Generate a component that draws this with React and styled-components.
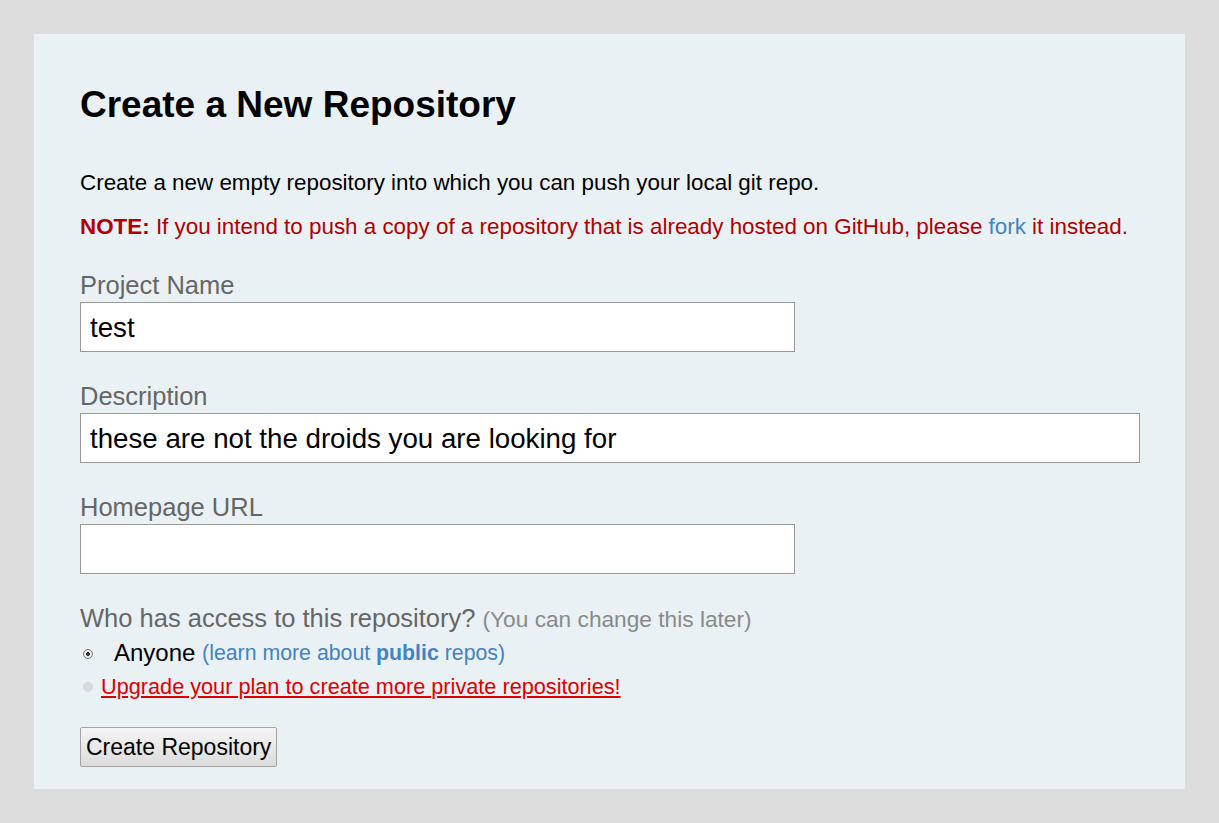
import React from "react";
import styled, { createGlobalStyle } from "styled-components";

const Global = createGlobalStyle`
  html, body { margin: 0; padding: 0; background: #dddddd; }
  body { font-family: "Liberation Sans", Arial, sans-serif; }
`;

const Page = styled.div`
  padding: 34px;
  min-height: 823px;
  box-sizing: border-box;
`;

const Panel = styled.div`
  background: #e9f1f5;
  padding: 49px 46px 0 46px;
  box-sizing: border-box;
  height: 755px;
`;

const Title = styled.h1`
  margin: 0 0 43px;
  font-size: 37px;
  line-height: 44px;
  font-weight: bold;
  color: #000;
`;

const Text = styled.p`
  margin: 0 0 ${(p) => p.$mb || 0}px;
  font-size: 22.4px;
  line-height: 26px;
  color: ${(p) => p.$color || "#000"};
`;

const Link = styled.a`
  color: #4183c4;
  text-decoration: none;
  font-weight: ${(p) => (p.$bold ? "bold" : "normal")};
`;

const Field = styled.div`
  display: flex;
  flex-direction: column;
  margin-top: ${(p) => p.$mt || 0}px;
`;

const Label = styled.label`
  font-size: 25.5px;
  line-height: 30px;
  color: #666;
  margin-bottom: 2px;
  white-space: nowrap;
`;

const Input = styled.div`
  width: ${(p) => p.$w}px;
  height: 50px;
  box-sizing: border-box;
  background: #fff;
  border: 1px solid #999;
  font-size: 27.7px;
  line-height: 50px;
  padding: 0 9px;
  color: #000;
  white-space: nowrap;
  overflow: hidden;
`;

const Muted = styled.span`
  color: #8a8a8a;
  font-size: 22.7px;
`;

const Option = styled.div`
  display: flex;
  align-items: center;
  height: 34px;
  font-size: ${(p) => p.$size}px;
  color: #000;
  white-space: pre;
`;

const Radio = styled.span`
  width: 10px;
  height: 10px;
  border-radius: 50%;
  box-sizing: border-box;
  margin-left: 3px;
  margin-right: ${(p) => p.$mr}px;
  margin-top: ${(p) => p.$mt || 0}px;
  border: 1px solid ${(p) => (p.$disabled ? "#d6d6d6" : "#7c7c7c")};
  background: ${(p) =>
    p.$disabled ? "#d9d9d9" : "radial-gradient(circle, #333 0 1.6px, #e6e6e6 2.2px)"};
  flex-shrink: 0;
`;

const Small = styled.span`
  font-size: 21.3px;
`;

const Upgrade = styled.a`
  color: #e00000;
  text-decoration: underline;
  text-underline-offset: 2px;
  font-size: 21.7px;
`;

const ButtonRow = styled.div`
  margin-top: 23px;
`;

const Button = styled.button`
  font-family: "Liberation Sans", Arial, sans-serif;
  font-size: 23px;
  height: 40px;
  padding: 0 5px;
  border: 1px solid #a3a3a3;
  border-radius: 2px;
  background: linear-gradient(#f5f5f5, #dcdcdc);
  color: #000;
`;

export default function App() {
  return (
    <>
      <Global />
      <Page>
        <Panel>
          <Title>Create a New Repository</Title>
          <Text $mb={18}>
            Create a new empty repository into which you can push your local git repo.
          </Text>
          <Text $color="#b20000">
            <b>NOTE:</b> If you intend to push a copy of a repository that is already hosted on
            GitHub, please <Link>fork</Link> it instead.
          </Text>
          <Field $mt={30}>
            <Label>Project Name</Label>
            <Input $w={715}>test</Input>
          </Field>
          <Field $mt={29}>
            <Label>Description</Label>
            <Input $w={1060}>these are not the droids you are looking for</Input>
          </Field>
          <Field $mt={29}>
            <Label>Homepage URL</Label>
            <Input $w={715} />
          </Field>
          <Field $mt={29}>
            <Label>
              Who has access to this repository? <Muted>(You can change this later)</Muted>
            </Label>
            <Option $size={24}>
              <Radio $mr={21} $mt={1} />
              Anyone{" "}
              <Small>
                <Link>(learn more about </Link>
                <Link $bold>public</Link>
                <Link> repos)</Link>
              </Small>
            </Option>
            <Option $size={21.7}>
              <Radio $disabled $mr={8} $mt={-1} />
              <Upgrade>Upgrade your plan to create more private repositories!</Upgrade>
            </Option>
          </Field>
          <ButtonRow>
            <Button>Create Repository</Button>
          </ButtonRow>
        </Panel>
      </Page>
    </>
  );
}
